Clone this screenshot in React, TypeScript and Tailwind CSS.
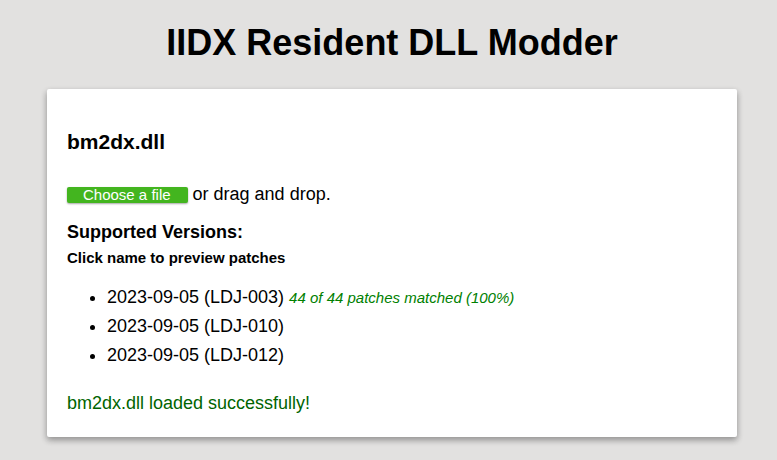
export default function App() {
  const versions = [
    { name: '2023-09-05 (LDJ-003)', match: '44 of 44 patches matched (100%)' },
    { name: '2023-09-05 (LDJ-010)' },
    { name: '2023-09-05 (LDJ-012)' },
  ];

  return (
    <div className="min-h-[460px] bg-[#e2e1e0] pl-[7px] pb-6 text-[18px] text-black" style={{ fontFamily: '"Liberation Sans", Arial, sans-serif' }}>
      <h1 className="pt-[22px] text-center text-[36px] font-bold leading-[41px]">IIDX Resident DLL Modder</h1>
      <div className="mx-auto mt-[26px] w-[690px] rounded-[2px] bg-white px-5 pt-[41px] pb-[23px] shadow-[0_3px_6px_rgba(0,0,0,0.16),0_3px_6px_rgba(0,0,0,0.23)]">
        <h3 className="text-[21px] font-bold leading-6">bm2dx.dll</h3>
        <div className="mt-[30px] flex items-center">
          <label className="inline-block h-[16px] rounded-[2px] bg-[#43b51f] pl-4 pr-[17px] text-[15px] leading-[16px] text-white shadow-[0_1px_2px_rgba(0,0,0,0.35)]">
            Choose a file
          </label>
          <span className="ml-[5px] leading-[21px]">or drag and drop.</span>
        </div>
        <h4 className="mt-[17px] text-[18px] font-bold leading-[21px]">Supported Versions:</h4>
        <h5 className="mt-[6px] text-[15px] font-bold leading-[17px]">Click name to preview patches</h5>
        <ul className="mt-[21px] list-disc pl-[40px]">
          {versions.map(v => (
            <li key={v.name} className="leading-[21px] mb-[8px]">
              {v.name}
              {v.match && <i className="ml-[5px] text-[15px] text-[#008000]">{v.match}</i>}
            </li>
          ))}
        </ul>
        <p className="mt-[27px] leading-[21px] text-[#006400]">bm2dx.dll loaded successfully!</p>
      </div>
    </div>
  );
}
